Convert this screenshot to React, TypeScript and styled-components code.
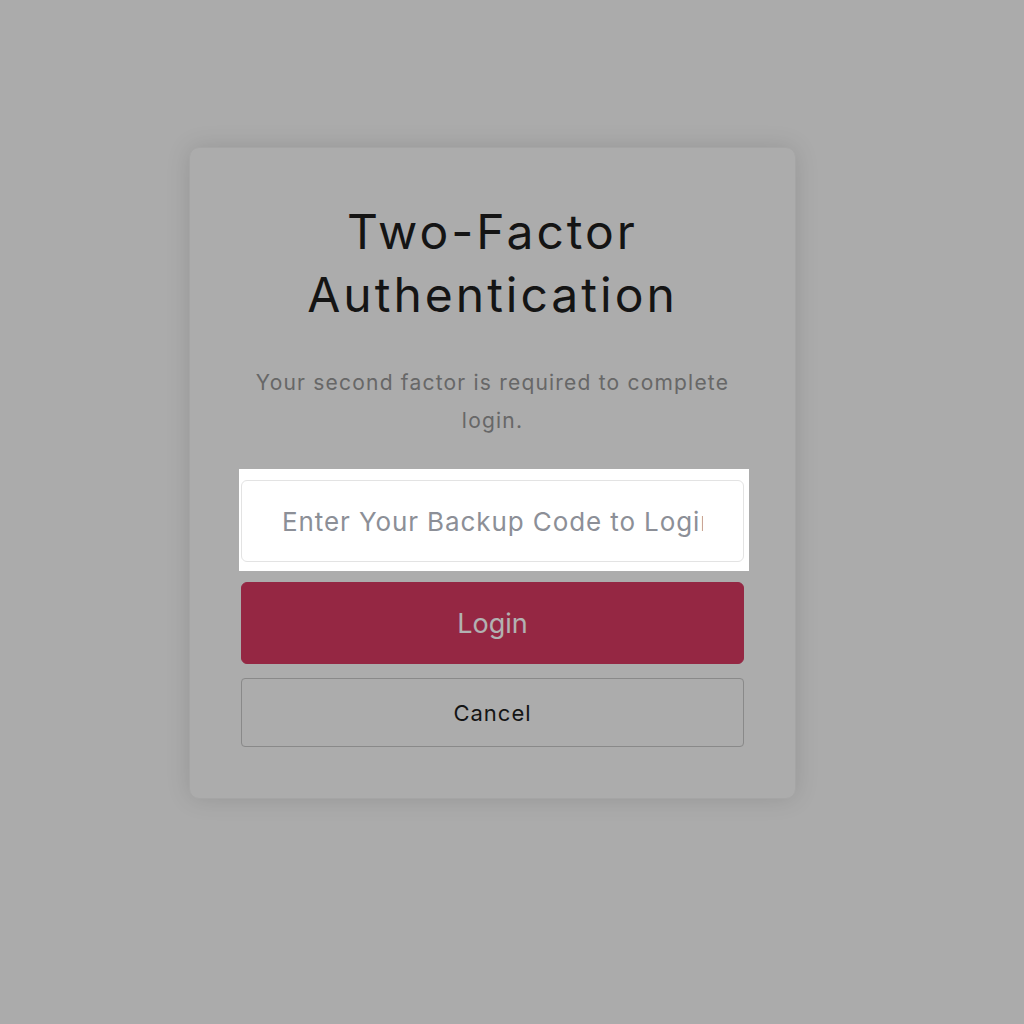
import React from 'react';
import styled, { createGlobalStyle } from 'styled-components';

const GlobalStyle = createGlobalStyle`
  html, body {
    margin: 0;
    padding: 0;
    background: #f5f5f5;
    font-family: Inter, 'Noto Sans', sans-serif;
  }
`;

const Page = styled.div`
  min-height: 1024px;
  padding: 147px 0 0 189px;
  box-sizing: border-box;
`;

const Card = styled.div`
  width: 607px;
  box-sizing: border-box;
  padding: 52px 51px 51px;
  background: #f6f6f6;
  border: 1px solid #ececec;
  border-radius: 10px;
  box-shadow: 0 0 24px rgba(0, 0, 0, 0.12);
  display: flex;
  flex-direction: column;
  align-items: center;
`;

const Title = styled.h1`
  margin: 0;
  font-size: 48px;
  font-weight: 400;
  line-height: 63px;
  color: #1e1e1e;
  text-align: center;
  letter-spacing: 3px;
`;

const Subtitle = styled.p`
  margin: 38px 0 0;
  max-width: 490px;
  font-size: 21px;
  line-height: 38px;
  color: #949494;
  text-align: center;
  letter-spacing: 1.2px;
`;

const Spotlight = styled.div`
  position: relative;
  align-self: stretch;
  margin-top: 40px;
`;

const Halo = styled.div`
  position: absolute;
  top: -11px;
  left: -2px;
  right: -5px;
  bottom: -9px;
  background: #fff;
  z-index: 1;
  box-shadow: 0 0 0 3000px rgba(0, 0, 0, 0.3);
  pointer-events: none;
`;

const CodeInput = styled.input`
  position: relative;
  z-index: 2;
  display: block;
  width: 100%;
  height: 82px;
  box-sizing: border-box;
  padding: 0 40px;
  border: 1px solid #e3e3e3;
  border-radius: 6px;
  background: #fff;
  font-family: inherit;
  font-size: 26px;
  letter-spacing: 0.9px;
  text-align: center;
  outline: none;
  &::placeholder {
    color: #8c8f97;
  }
`;

const Button = styled.button<{ $primary?: boolean }>`
  align-self: stretch;
  box-sizing: border-box;
  font-family: inherit;
  cursor: pointer;
  letter-spacing: ${(p) => (p.$primary ? '0' : '1px')};
  margin-top: ${(p) => (p.$primary ? '20px' : '14px')};
  height: ${(p) => (p.$primary ? '82px' : '69px')};
  border-radius: ${(p) => (p.$primary ? '6px' : '4px')};
  border: 1px solid ${(p) => (p.$primary ? '#d43a62' : '#c4c4c4')};
  background: ${(p) => (p.$primary ? '#d63861' : 'transparent')};
  color: ${(p) => (p.$primary ? '#ffffff' : '#1e1e1e')};
  font-size: ${(p) => (p.$primary ? '27px' : '22px')};
`;

export default function App() {
  return (
    <Page>
      <GlobalStyle />
      <Card>
        <Title>
          Two-Factor
          <br />
          Authentication
        </Title>
        <Subtitle>Your second factor is required to complete login.</Subtitle>
        <Spotlight>
          <Halo />
          <CodeInput placeholder="Enter Your Backup Code to Login" />
        </Spotlight>
        <Button $primary>Login</Button>
        <Button>Cancel</Button>
      </Card>
    </Page>
  );
}
